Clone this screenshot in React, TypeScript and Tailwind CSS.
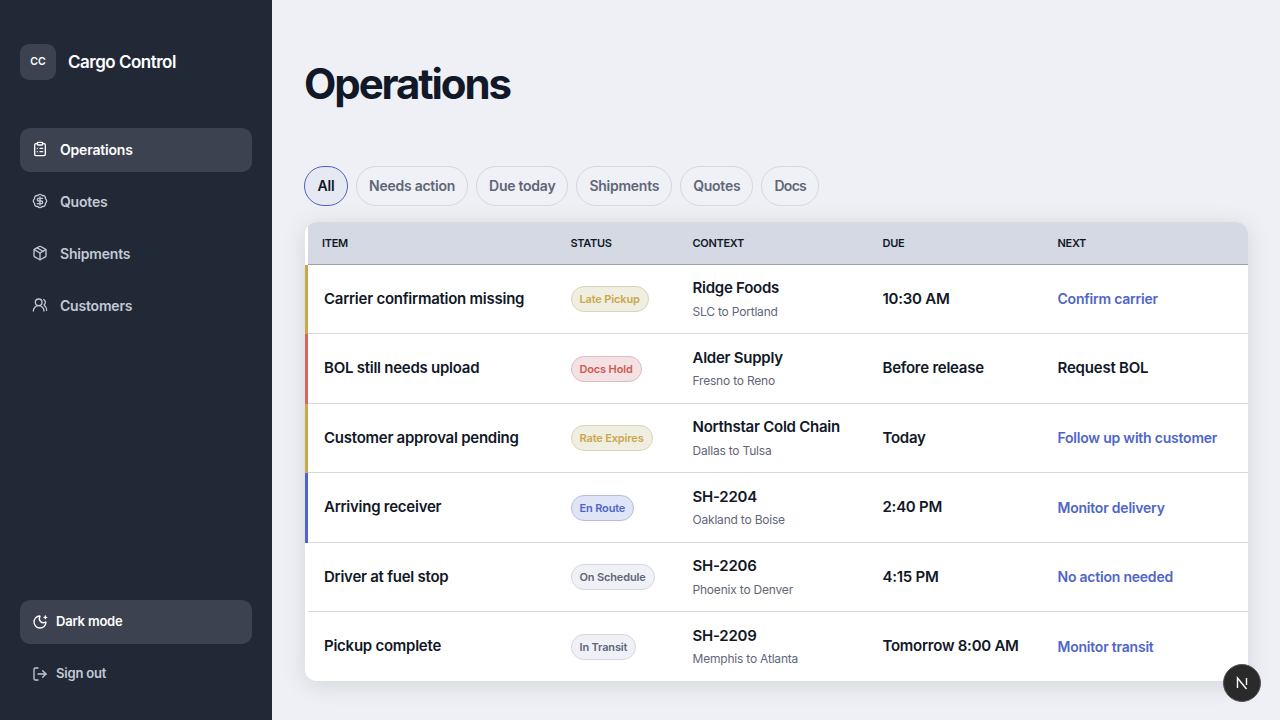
import { ClipboardList, BadgeDollarSign, Package, UsersRound, MoonStar, LogOut } from 'lucide-react';

const nav = [
  { label: 'Operations', icon: ClipboardList, active: true },
  { label: 'Quotes', icon: BadgeDollarSign },
  { label: 'Shipments', icon: Package },
  { label: 'Customers', icon: UsersRound },
];

const filters = ['All', 'Needs action', 'Due today', 'Shipments', 'Quotes', 'Docs'];

const badgeStyles = {
  amber: 'bg-[#f0eee0] border-[#d9d4b8] text-[#c9a84c]',
  red: 'bg-[#f3e1e3] border-[#dcbcc0] text-[#cf5a52]',
  blue: 'bg-[#dfe4f6] border-[#b4bddb] text-[#4f66c8]',
  gray: 'bg-[#eff1f6] border-[#d4d7df] text-[#5f6678]',
};

const edgeStyles = {
  amber: 'border-l-[#c9a84c]',
  red: 'border-l-[#cf6a5e]',
  blue: 'border-l-[#4f66c8]',
  none: 'border-l-white',
};

const rows = [
  { item: 'Carrier confirmation missing', badge: 'Late Pickup', tone: 'amber', edge: 'amber', ctx: 'Ridge Foods', route: 'SLC to Portland', due: '10:30 AM', next: 'Confirm carrier', link: true },
  { item: 'BOL still needs upload', badge: 'Docs Hold', tone: 'red', edge: 'red', ctx: 'Alder Supply', route: 'Fresno to Reno', due: 'Before release', next: 'Request BOL', link: false },
  { item: 'Customer approval pending', badge: 'Rate Expires', tone: 'amber', edge: 'amber', ctx: 'Northstar Cold Chain', route: 'Dallas to Tulsa', due: 'Today', next: 'Follow up with customer', link: true },
  { item: 'Arriving receiver', badge: 'En Route', tone: 'blue', edge: 'blue', ctx: 'SH-2204', route: 'Oakland to Boise', due: '2:40 PM', next: 'Monitor delivery', link: true },
  { item: 'Driver at fuel stop', badge: 'On Schedule', tone: 'gray', edge: 'none', ctx: 'SH-2206', route: 'Phoenix to Denver', due: '4:15 PM', next: 'No action needed', link: true },
  { item: 'Pickup complete', badge: 'In Transit', tone: 'gray', edge: 'none', ctx: 'SH-2209', route: 'Memphis to Atlanta', due: 'Tomorrow 8:00 AM', next: 'Monitor transit', link: true },
] as const;

export default function App() {
  return (
    <div className="flex h-[720px] overflow-hidden bg-[#eef0f5] font-['Inter',sans-serif] text-[#111827]">
      {/* Sidebar */}
      <aside className="flex w-[272px] shrink-0 flex-col bg-[#212936] px-5 pt-11 pb-6">
        <div className="flex items-center gap-3">
          <div className="flex h-9 w-9 items-center justify-center rounded-[9px] bg-[#3c424f] text-[10.5px] font-semibold text-white">CC</div>
          <span className="pt-px text-[17px] font-semibold tracking-[-0.5px] text-white">Cargo Control</span>
        </div>

        <nav className="mt-[48px] flex flex-col gap-2">
          {nav.map(({ label, icon: Icon, active }) => (
            <div
              key={label}
              className={`flex h-11 items-center gap-3 rounded-[10px] px-3 pb-[2px] text-[14px] font-semibold tracking-[-0.2px] ${active ? 'bg-[#3c424f] text-white' : 'text-[#c3c9d5]'}`}
            >
              <Icon className="h-4 w-4" strokeWidth={2} />
              {label}
            </div>
          ))}
        </nav>

        <div className="mt-auto flex flex-col gap-2">
          <div className="flex h-11 items-center gap-2 rounded-[10px] bg-[#3c424f] px-3 text-[13px] font-semibold tracking-[-0.2px] text-white">
            <MoonStar className="h-4 w-4" strokeWidth={2} />
            Dark mode
          </div>
          <div className="flex h-11 items-center gap-2 rounded-[10px] px-3 text-[13px] font-semibold tracking-[-0.2px] text-[#c3c9d5]">
            <LogOut className="h-4 w-4" strokeWidth={2} />
            Sign out
          </div>
        </div>
      </aside>

      {/* Main */}
      <main className="flex-1 px-8 pt-[58px]">
        <h1 className="text-[42px] leading-[52px] font-bold tracking-[-2.1px] text-[#111827]">Operations</h1>

        <div className="mt-[56px] flex gap-2">
          {filters.map((f, i) => (
            <span
              key={f}
              className={`flex h-10 items-center justify-center rounded-full border pb-px text-[14px] font-semibold tracking-[-0.25px] last:tracking-[-0.7px] ${i === 0 ? 'w-[44px] border-[#4f5fc0] bg-[#e6e9f2] text-[#111827]' : 'border-[#d5d8e0] bg-[#eff1f6] px-3 text-[#5f6678]'}`}
            >
              {f}
            </span>
          ))}
        </div>

        <div className="mt-4 ml-px w-[943px] overflow-hidden rounded-xl bg-white shadow-[0_4px_24px_rgba(17,24,39,0.12)]">
          <table className="w-full table-fixed border-collapse">
            <thead>
              <tr className="h-[42px] border-b border-[#9ca1ad] bg-[#d5d9e4] text-left text-[11px] font-semibold tracking-[-0.3px] text-[#111827]">
                <th className="w-[264px] border-l-[3px] border-l-white pl-[14px] font-semibold">ITEM</th>
                <th className="w-[122px] font-semibold">STATUS</th>
                <th className="w-[190px] font-semibold">CONTEXT</th>
                <th className="w-[175px] font-semibold">DUE</th>
                <th className="font-semibold">NEXT</th>
              </tr>
            </thead>
            <tbody>
              {rows.map((r) => (
                <tr key={r.item} className="h-[69.5px] border-b border-[#d5d8e0] last:border-b-0">
                  <td className={`border-l-[3px] pl-4 text-[15px] font-semibold tracking-[-0.25px] ${edgeStyles[r.edge]}`}>{r.item}</td>
                  <td>
                    <span className={`inline-flex h-[26px] items-center rounded-full border px-2 text-[11px] font-semibold tracking-[-0.15px] ${badgeStyles[r.tone]}`}>{r.badge}</span>
                  </td>
                  <td>
                    <div className="text-[15px] font-semibold tracking-[-0.25px]">{r.ctx}</div>
                    <div className="mt-[3px] text-[12px] tracking-[-0.2px] text-[#5f6678]">{r.route}</div>
                  </td>
                  <td className="text-[15px] font-semibold tracking-[-0.25px]">{r.due}</td>
                  <td className={`font-semibold ${r.link ? 'text-[14px] tracking-[-0.22px] text-[#4f66c8]' : 'text-[15px] tracking-[-0.2px] text-[#111827]'}`}>{r.next}</td>
                </tr>
              ))}
            </tbody>
          </table>
        </div>
      </main>

      {/* Dev badge */}
      <div className="absolute top-[664px] left-[1223px] flex h-[38px] w-[38px] items-center justify-center rounded-full border border-[#555] bg-[#2a2a2a]">
        <svg width="16" height="16" viewBox="0 0 16 16" fill="none" stroke="white" strokeWidth="1.4">
          <path d="M3.5 13V3L12.5 14" />
          <path d="M12.5 3V10" />
        </svg>
      </div>
    </div>
  );
}
